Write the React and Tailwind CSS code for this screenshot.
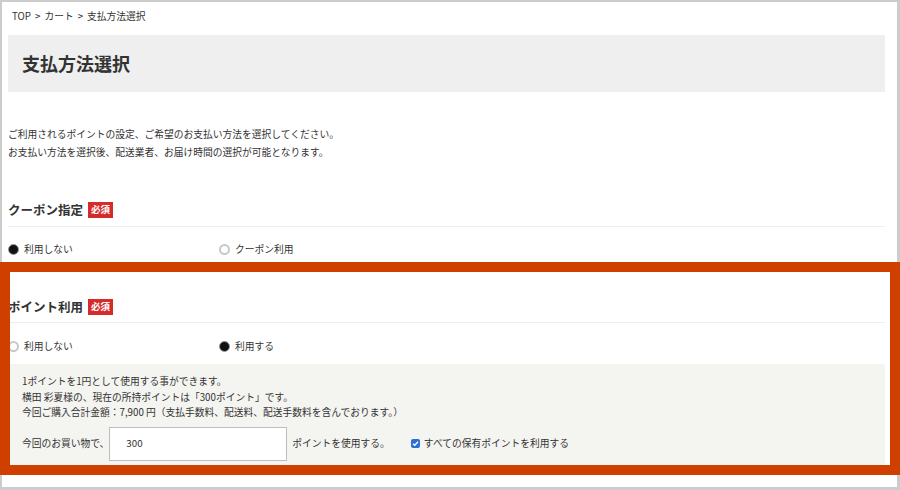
import React from "react";

const font = { fontFamily: '"Noto Sans CJK JP", "Noto Sans", sans-serif' };

function Radio({ checked }) {
  return checked ? (
    <span className="inline-block w-[11px] h-[11px] rounded-full bg-[#111] border border-[#9a9a9a] shrink-0" />
  ) : (
    <span className="inline-block w-[11px] h-[11px] rounded-full bg-white border-2 border-[#c8c8c8] shrink-0" />
  );
}

function Badge() {
  return (
    <span className="ml-[5px] inline-flex items-center justify-center w-[25px] h-[16px] bg-[#d52b2b] text-white text-[9.5px] font-bold leading-none">
      必須
    </span>
  );
}

function Option({ checked, label }) {
  return (
    <div className="flex items-center gap-[5px]">
      <Radio checked={checked} />
      <span>{label}</span>
    </div>
  );
}

export default function App() {
  return (
    <div
      className="relative w-[900px] h-[490px] bg-white border-t-2 border-l-2 border-r-[3px] border-b-[3px] border-[#cccccc] text-[#333] text-[9.75px]"
      style={font}
    >
      <div className="ml-[6px] w-[877px] h-[485px] overflow-hidden flex flex-col">
        <div className="h-[28px] flex items-center pl-[4px]">
          <span>TOP</span>
          <span className="mx-[4px]">&gt;</span>
          <span>カート</span>
          <span className="mx-[4px]">&gt;</span>
          <span>支払方法選択</span>
        </div>
        <div className="mt-[5px] h-[57px] bg-[#efefef] flex items-center pl-[14px] text-[18px] font-bold text-[#333]">
          支払方法選択
        </div>
        <div className="mt-[33px] leading-[18px]">
          <div>ご利用されるポイントの設定、ご希望のお支払い方法を選択してください。</div>
          <div>お支払い方法を選択後、配送業者、お届け時間の選択が可能となります。</div>
        </div>

        <div className="mt-[37px] h-[29px] pb-[4px] flex items-center border-b border-[#eeeeee]">
          <span className="text-[12.5px] font-bold">クーポン指定</span>
          <Badge />
        </div>
        <div className="mt-[11px] h-[22px] flex items-center">
          <div className="w-[211px]">
            <Option checked label="利用しない" />
          </div>
          <Option label="クーポン利用" />
        </div>

        <div className="mt-[36px] h-[27px] pb-[4px] flex items-center border-b border-[#eeeeee]">
          <span className="text-[12.5px] font-bold">ポイント利用</span>
          <Badge />
        </div>
        <div className="mt-[12px] h-[22px] flex items-center">
          <div className="w-[211px]">
            <Option label="利用しない" />
          </div>
          <Option checked label="利用する" />
        </div>

        <div className="mt-[7px] bg-[#f4f4f0] pl-[14px] pt-[10px] pb-[10px]">
          <div className="leading-[15.5px]">
            <div>1ポイントを1円として使用する事ができます。</div>
            <div>横田 彩夏様の、現在の所持ポイントは「300ポイント」です。</div>
            <div>今回ご購入合計金額：7,900 円（支払手数料、配送料、配送手数料を含んでおります。）</div>
          </div>
          <div className="mt-[6px] flex items-center">
            <span>今回のお買い物で、</span>
            <div className="w-[178px] h-[34px] bg-white border border-[#bdbdbd] flex items-center pl-[16px]">300</div>
            <span className="ml-[5px]">ポイントを使用する。</span>
            <span className="ml-[21px] w-[9px] h-[9px] rounded-[2px] bg-[#2b6fd6] flex items-center justify-center">
              <svg width="7" height="7" viewBox="0 0 10 10">
                <path d="M1.5 5.2 L4 7.6 L8.6 2.4" fill="none" stroke="white" strokeWidth="2" />
              </svg>
            </span>
            <span className="ml-[4px]">すべての保有ポイントを利用する</span>
          </div>
        </div>
      </div>

      <div className="absolute left-[-2px] top-[260px] w-[900px] h-[213px] border-[10px] border-[#cf4000]" />
    </div>
  );
}
